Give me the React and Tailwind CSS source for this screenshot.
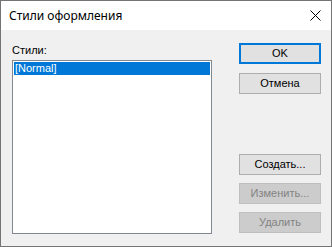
export default function App() {
    const Btn = ({ label, primary, disabled, className = "" }) => (
        <div
            className={`h-[21px] w-[82px] flex items-center justify-center text-[11px] leading-[13px] ${
                primary
                    ? "border-2 border-[#0078d7] bg-[#e1e1e1] text-black"
                    : disabled
                    ? "border border-[#bfbfbf] bg-[#cccccc] text-[#838383]"
                    : "border border-[#adadad] bg-[#e1e1e1] text-black"
            } ${className}`}
        >
            {label}
        </div>
    );

    return (
        <div
            className="w-[332px] h-[247px] border border-[#747474] flex flex-col bg-[#f0f0f0]"
            style={{ fontFamily: '"Liberation Sans", Arial, sans-serif' }}
        >
            <div className="h-[29px] bg-white flex items-center justify-between pl-[8px] pr-[10px]">
                <span
                    className="text-[12px] text-black"
                    style={{ fontFamily: '"Noto Sans", sans-serif' }}
                >
                    Стили оформления
                </span>
                <svg width="11" height="11" viewBox="0 0 11 11">
                    <path d="M0.5 0.5 L10.5 10.5 M10.5 0.5 L0.5 10.5" stroke="#000" strokeWidth="1" />
                </svg>
            </div>

            <div className="flex-1 flex pl-[11px] pt-[13px]">
                <div className="w-[200px] flex flex-col">
                    <div className="h-[17px] text-[11px] leading-[13px] text-black pt-[1px]">Стили:</div>
                    <div className="h-[174px] border border-[#828790] bg-white p-[1px]">
                        <div className="h-[13px] bg-[#0078d7] text-white text-[11px] leading-[13px] pl-[1px]">
                            [Normal]
                        </div>
                    </div>
                </div>

                <div className="ml-[27px] flex flex-col">
                    <Btn label="OK" primary />
                    <Btn label="Отмена" className="mt-[9px]" />
                    <Btn label="Создать..." className="mt-[60px]" />
                    <Btn label="Изменить..." disabled className="mt-[8px]" />
                    <Btn label="Удалить" disabled className="mt-[8px]" />
                </div>
            </div>
        </div>
    );
}
